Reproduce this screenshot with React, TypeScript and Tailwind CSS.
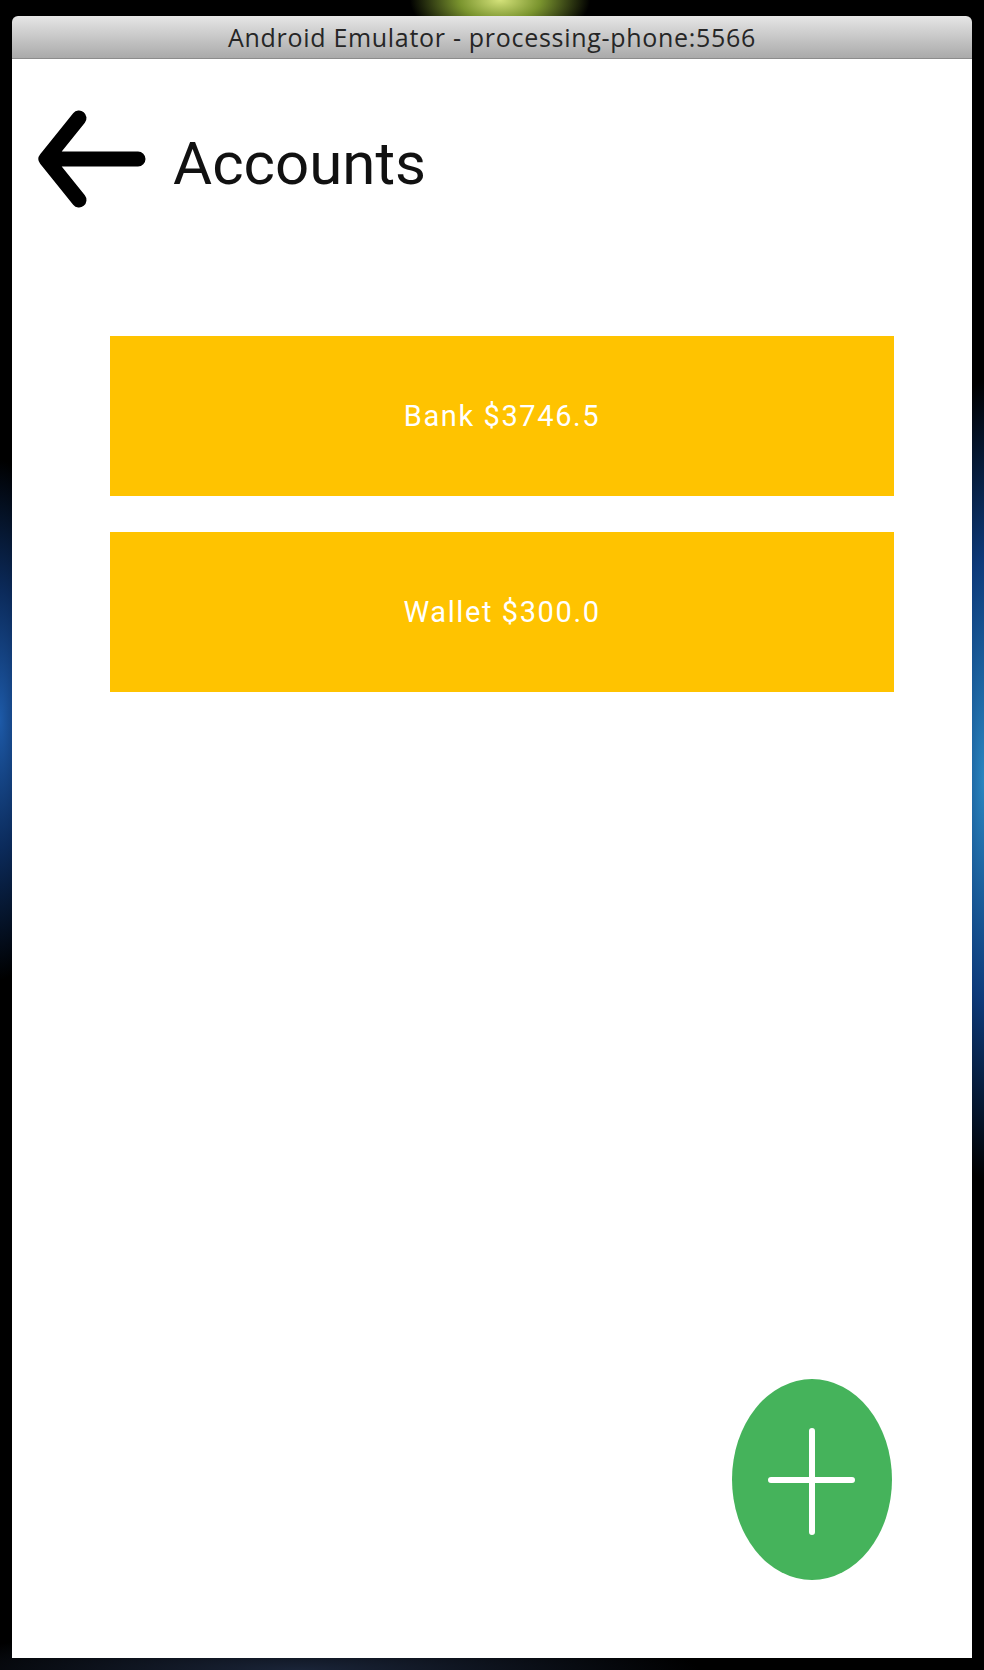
import React from "react";

function BackArrow() {
  return (
    <svg width="120" height="120" viewBox="0 0 120 120" className="shrink-0">
      <path
        d="M108 59 H18 M49 18 L16 59 L49 100"
        fill="none"
        stroke="#000"
        strokeWidth="15"
        strokeLinecap="round"
        strokeLinejoin="round"
      />
    </svg>
  );
}

function AccountButton({ label }: { label: string }) {
  return (
    <div className="flex h-[160px] w-[784px] items-center justify-center bg-[#ffc300]">
      <span className="font-['Roboto','Liberation_Sans',sans-serif] text-[29px] font-normal leading-none tracking-[1.6px] text-white">
        {label}
      </span>
    </div>
  );
}

export default function App() {
  return (
    <div className="flex h-[1670px] w-[984px] flex-col bg-[radial-gradient(ellipse_90px_45px_at_500px_0px,#d4e27a_0%,#7a942e_45%,transparent_100%),radial-gradient(ellipse_60px_260px_at_0px_720px,#1d5aa8_0%,#0b2a5a_50%,transparent_100%),radial-gradient(ellipse_60px_400px_at_984px_780px,#2a86c0_0%,#0d3a7a_55%,transparent_100%),radial-gradient(ellipse_400px_40px_at_300px_1670px,#1a2438_0%,transparent_100%)] bg-black px-[12px] pt-[16px] pb-[12px]">
      <div className="flex flex-1 flex-col overflow-hidden rounded-t-[6px]">
        <div className="flex h-[43px] shrink-0 items-center justify-center border-b border-[#8c8c8c] bg-gradient-to-b from-[#e6e6e6] to-[#aaaaaa]">
          <span className="font-['Open_Sans','Liberation_Sans',sans-serif] text-[25px] leading-none tracking-[0.7px] text-[#262626]">
            Android Emulator - processing-phone:5566
          </span>
        </div>
        <div className="relative flex flex-1 flex-col bg-white">
          <div className="mt-[41px] flex h-[120px] items-start pl-[18px]">
            <BackArrow />
            <span className="ml-[23px] block font-['Roboto','Liberation_Sans',sans-serif] text-[60px] leading-[128px] text-[#111]">
              Accounts
            </span>
          </div>
          <div className="ml-[98px] mt-[116px] flex flex-col gap-[36px]">
            <AccountButton label="Bank $3746.5" />
            <AccountButton label="Wallet $300.0" />
          </div>
          <div className="absolute bottom-[78px] right-[80px] flex h-[201px] w-[160px] items-center justify-center rounded-[50%] bg-[#45b35b]">
            <svg width="160" height="201" viewBox="0 0 160 201">
              <path
                d="M39 101 H120 M80 52 V153"
                stroke="#fff"
                strokeWidth="6"
                strokeLinecap="round"
                fill="none"
              />
            </svg>
          </div>
        </div>
      </div>
    </div>
  );
}
